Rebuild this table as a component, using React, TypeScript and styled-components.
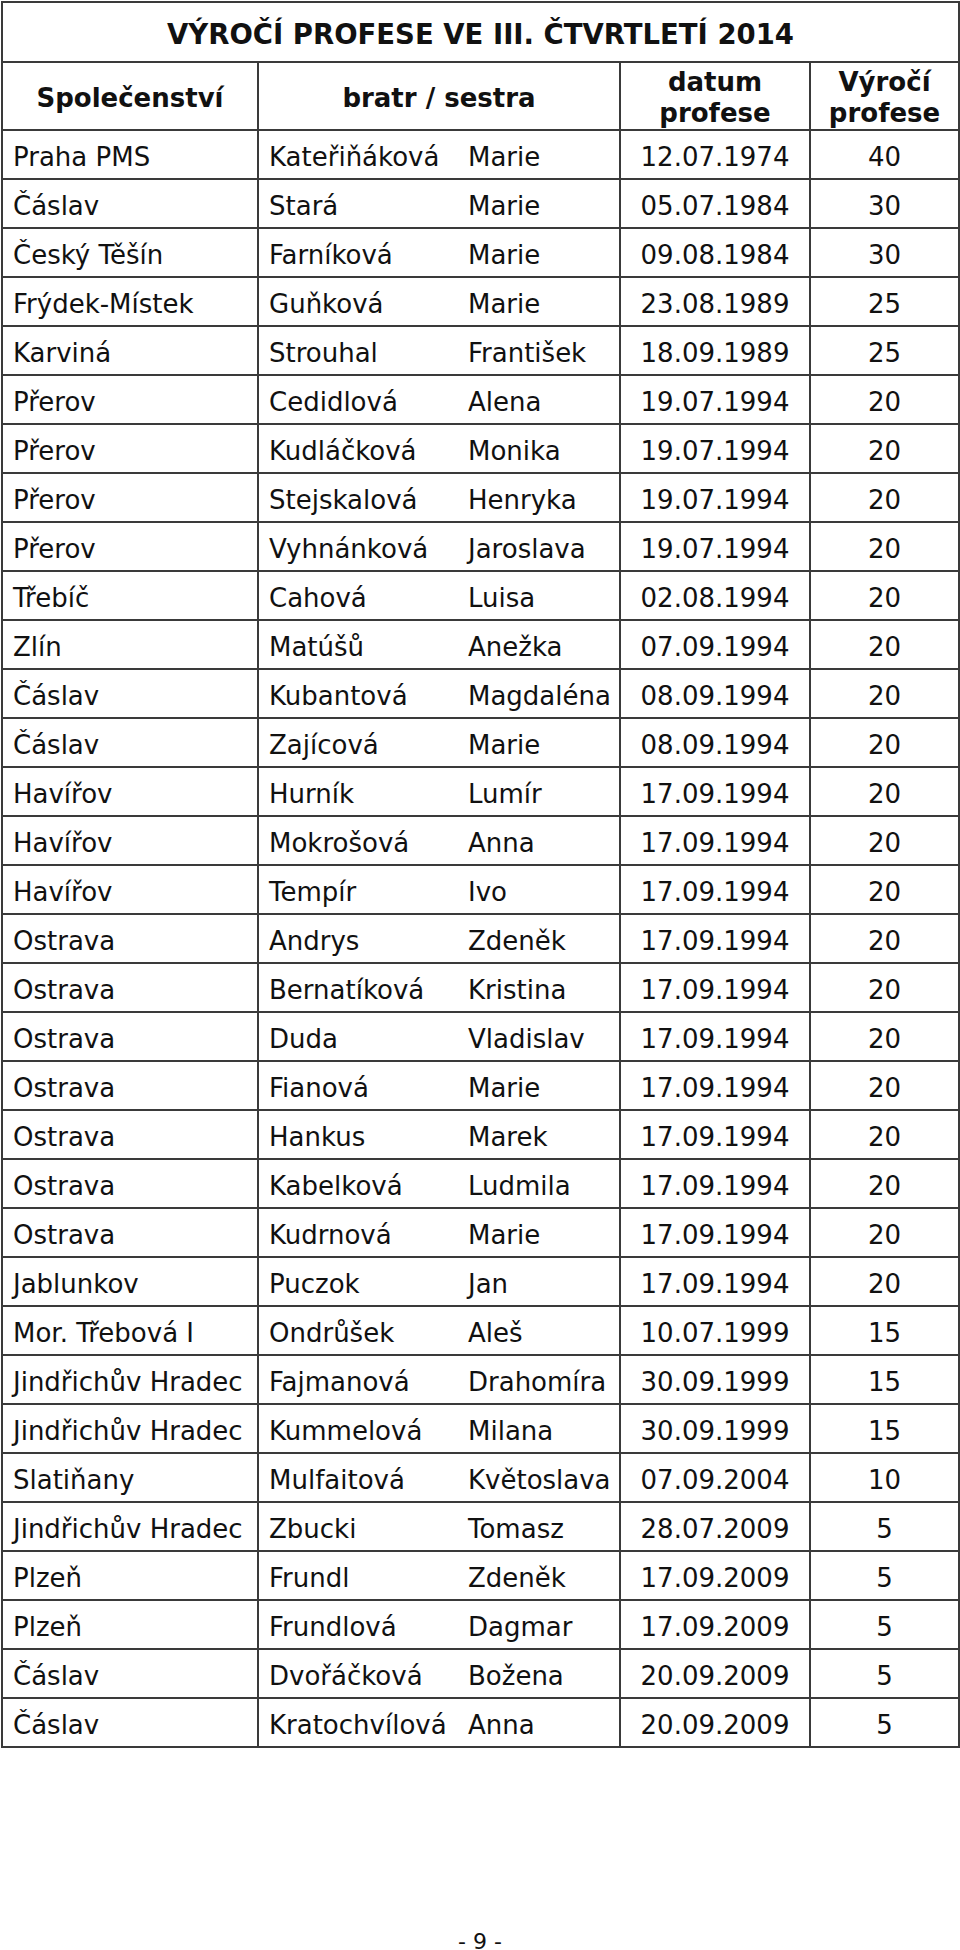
import React from "react";
import styled, { createGlobalStyle } from "styled-components";

const GlobalStyle = createGlobalStyle`
  html, body {
    margin: 0;
    padding: 0;
    background: #ffffff;
  }
  body {
    font-family: "DejaVu Sans", Verdana, sans-serif;
    color: #111111;
  }
`;

type Row = [string, string, string, string, string];

const rows: Row[] = [
  ["Praha PMS", "Kateřiňáková", "Marie", "12.07.1974", "40"],
  ["Čáslav", "Stará", "Marie", "05.07.1984", "30"],
  ["Český Těšín", "Farníková", "Marie", "09.08.1984", "30"],
  ["Frýdek-Místek", "Guňková", "Marie", "23.08.1989", "25"],
  ["Karviná", "Strouhal", "František", "18.09.1989", "25"],
  ["Přerov", "Cedidlová", "Alena", "19.07.1994", "20"],
  ["Přerov", "Kudláčková", "Monika", "19.07.1994", "20"],
  ["Přerov", "Stejskalová", "Henryka", "19.07.1994", "20"],
  ["Přerov", "Vyhnánková", "Jaroslava", "19.07.1994", "20"],
  ["Třebíč", "Cahová", "Luisa", "02.08.1994", "20"],
  ["Zlín", "Matúšů", "Anežka", "07.09.1994", "20"],
  ["Čáslav", "Kubantová", "Magdaléna", "08.09.1994", "20"],
  ["Čáslav", "Zajícová", "Marie", "08.09.1994", "20"],
  ["Havířov", "Hurník", "Lumír", "17.09.1994", "20"],
  ["Havířov", "Mokrošová", "Anna", "17.09.1994", "20"],
  ["Havířov", "Tempír", "Ivo", "17.09.1994", "20"],
  ["Ostrava", "Andrys", "Zdeněk", "17.09.1994", "20"],
  ["Ostrava", "Bernatíková", "Kristina", "17.09.1994", "20"],
  ["Ostrava", "Duda", "Vladislav", "17.09.1994", "20"],
  ["Ostrava", "Fianová", "Marie", "17.09.1994", "20"],
  ["Ostrava", "Hankus", "Marek", "17.09.1994", "20"],
  ["Ostrava", "Kabelková", "Ludmila", "17.09.1994", "20"],
  ["Ostrava", "Kudrnová", "Marie", "17.09.1994", "20"],
  ["Jablunkov", "Puczok", "Jan", "17.09.1994", "20"],
  ["Mor. Třebová I", "Ondrůšek", "Aleš", "10.07.1999", "15"],
  ["Jindřichův Hradec", "Fajmanová", "Drahomíra", "30.09.1999", "15"],
  ["Jindřichův Hradec", "Kummelová", "Milana", "30.09.1999", "15"],
  ["Slatiňany", "Mulfaitová", "Květoslava", "07.09.2004", "10"],
  ["Jindřichův Hradec", "Zbucki", "Tomasz", "28.07.2009", "5"],
  ["Plzeň", "Frundl", "Zdeněk", "17.09.2009", "5"],
  ["Plzeň", "Frundlová", "Dagmar", "17.09.2009", "5"],
  ["Čáslav", "Dvořáčková", "Božena", "20.09.2009", "5"],
  ["Čáslav", "Kratochvílová", "Anna", "20.09.2009", "5"],
];

export default function App() {
  return (
    <Page>
      <GlobalStyle />
      <Sheet>
        <colgroup>
          <col style={{ width: 256 }} />
          <col style={{ width: 200 }} />
          <col style={{ width: 162 }} />
          <col style={{ width: 190 }} />
          <col style={{ width: 149 }} />
        </colgroup>
        <thead>
          <tr>
            <TitleCell colSpan={5}>VÝROČÍ PROFESE VE III. ČTVRTLETÍ 2014</TitleCell>
          </tr>
          <tr>
            <HeadCell>Společenství</HeadCell>
            <HeadCell colSpan={2}>bratr / sestra</HeadCell>
            <HeadCell>
              datum
              <br />
              profese
            </HeadCell>
            <HeadCell>
              Výročí
              <br />
              profese
            </HeadCell>
          </tr>
        </thead>
        <tbody>
          {rows.map((r, i) => (
            <tr key={i}>
              <Cell>{r[0]}</Cell>
              <Cell $joined="right">{r[1]}</Cell>
              <Cell $joined="left">{r[2]}</Cell>
              <Cell $center>{r[3]}</Cell>
              <Cell $center>{r[4]}</Cell>
            </tr>
          ))}
        </tbody>
      </Sheet>
      <PageNumber>- 9 -</PageNumber>
    </Page>
  );
}

const Page = styled.div`
  width: 960px;
  padding-top: 1px;
  display: flex;
  flex-direction: column;
`;

const Sheet = styled.table`
  margin-left: 1px;
  width: 957px;
  table-layout: fixed;
  border-collapse: collapse;
  border: 2px solid #3a3a3a;
  font-size: 26px;
`;

const TitleCell = styled.th`
  height: 54px;
  padding: 4px 0 0;
  border: 2px solid #3a3a3a;
  font-size: 27.5px;
  font-weight: 700;
  line-height: 32px;
  text-align: center;
  vertical-align: middle;
`;

const HeadCell = styled.th`
  height: 60px;
  padding: 4px 0 0;
  border: 2px solid #3a3a3a;
  font-size: 26px;
  font-weight: 700;
  line-height: 31px;
  text-align: center;
  vertical-align: middle;
`;

const Cell = styled.td<{ $center?: boolean; $joined?: "left" | "right" }>`
  height: 43px;
  padding: 4px 0 0 10px;
  border: 2px solid #3a3a3a;
  ${(p) => (p.$joined === "right" ? "border-right: none;" : "")}
  ${(p) => (p.$joined === "left" ? "border-left: none;" : "")}
  font-weight: 400;
  line-height: 30px;
  white-space: nowrap;
  text-align: ${(p) => (p.$center ? "center" : "left")};
  ${(p) => (p.$center ? "padding-left: 0;" : "")}
  vertical-align: middle;
`;

const PageNumber = styled.div`
  margin-top: 181px;
  align-self: center;
  font-size: 22px;
  line-height: 26px;
`;
